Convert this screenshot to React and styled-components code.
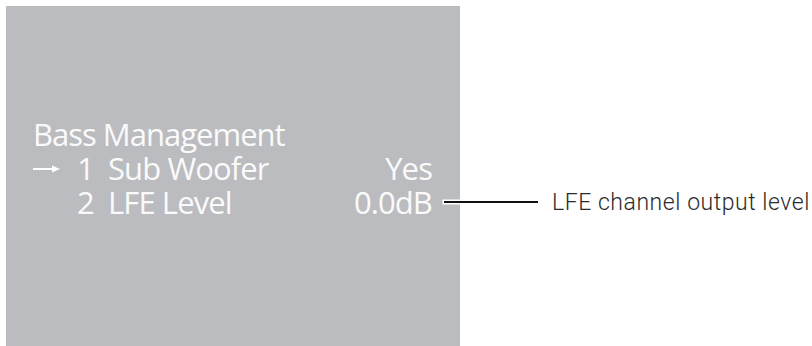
import styled, { createGlobalStyle } from "styled-components"

const GlobalStyle = createGlobalStyle`
  html, body {
    margin: 0;
    padding: 0;
    background: #fff;
  }
`

const rows = [
  { id: 1, label: "Sub Woofer", value: "Yes", selected: true },
  { id: 2, label: "LFE Level", value: "0.0dB", selected: false },
]

function Arrow() {
  return (
    <svg width="27" height="10" viewBox="0 0 27 10">
      <line x1="0" y1="5" x2="21" y2="5" stroke="#fff" strokeWidth="2" />
      <polygon points="19,1.5 27,5 19,8.5" fill="#fff" />
    </svg>
  )
}

export default function App() {
  return (
    <>
      <GlobalStyle />
      <Page>
        <Screen>
          <Title>Bass Management</Title>
          <Menu>
            {rows.map((row) => (
              <Row key={row.id}>
                <Pointer>{row.selected && <Arrow />}</Pointer>
                <Num>{row.id}</Num>
                <Name>{row.label}</Name>
                <Value>{row.value}</Value>
              </Row>
            ))}
          </Menu>
        </Screen>
        <Callout>
          <Leader />
          <Note>LFE channel output level</Note>
        </Callout>
      </Page>
    </>
  )
}

const Page = styled.div`
  display: flex;
  align-items: flex-start;
  width: 812px;
  height: 346px;
  overflow: hidden;
`

const Screen = styled.div`
  flex: none;
  width: 454px;
  height: 340px;
  margin: 6px 0 0 6px;
  box-sizing: border-box;
  padding: 111px 28px 0 27px;
  background: #bbbcc0;
  color: #fafafa;
  font-family: "Open Sans", "Noto Sans", sans-serif;
  font-size: 31px;
  line-height: 34px;
`

const Title = styled.div`
  letter-spacing: -1px;
`

const Menu = styled.div`
  display: flex;
  flex-direction: column;
`

const Row = styled.div`
  display: grid;
  grid-template-columns: 44px 31px 1fr auto;
  align-items: center;
  height: 34px;
  letter-spacing: -0.9px;
`

const Pointer = styled.div`
  display: flex;
  align-items: center;
  box-sizing: border-box;
  height: 34px;
  padding-top: 2px;
`

const Num = styled.div``

const Name = styled.div``

const Value = styled.div`
  text-align: right;
`

const Callout = styled.div`
  display: flex;
  align-items: center;
  gap: 14px;
  height: 26px;
  margin: 189px 0 0 -16px;
`

const Leader = styled.div`
  width: 94px;
  height: 1.5px;
  background: #111;
  box-shadow: 0 0 0 1.5px #fff;
`

const Note = styled.div`
  font-family: Roboto, "Liberation Sans", sans-serif;
  font-weight: 300;
  font-size: 23px;
  letter-spacing: 0.55px;
  color: #2a2a2a;
  white-space: nowrap;
`
